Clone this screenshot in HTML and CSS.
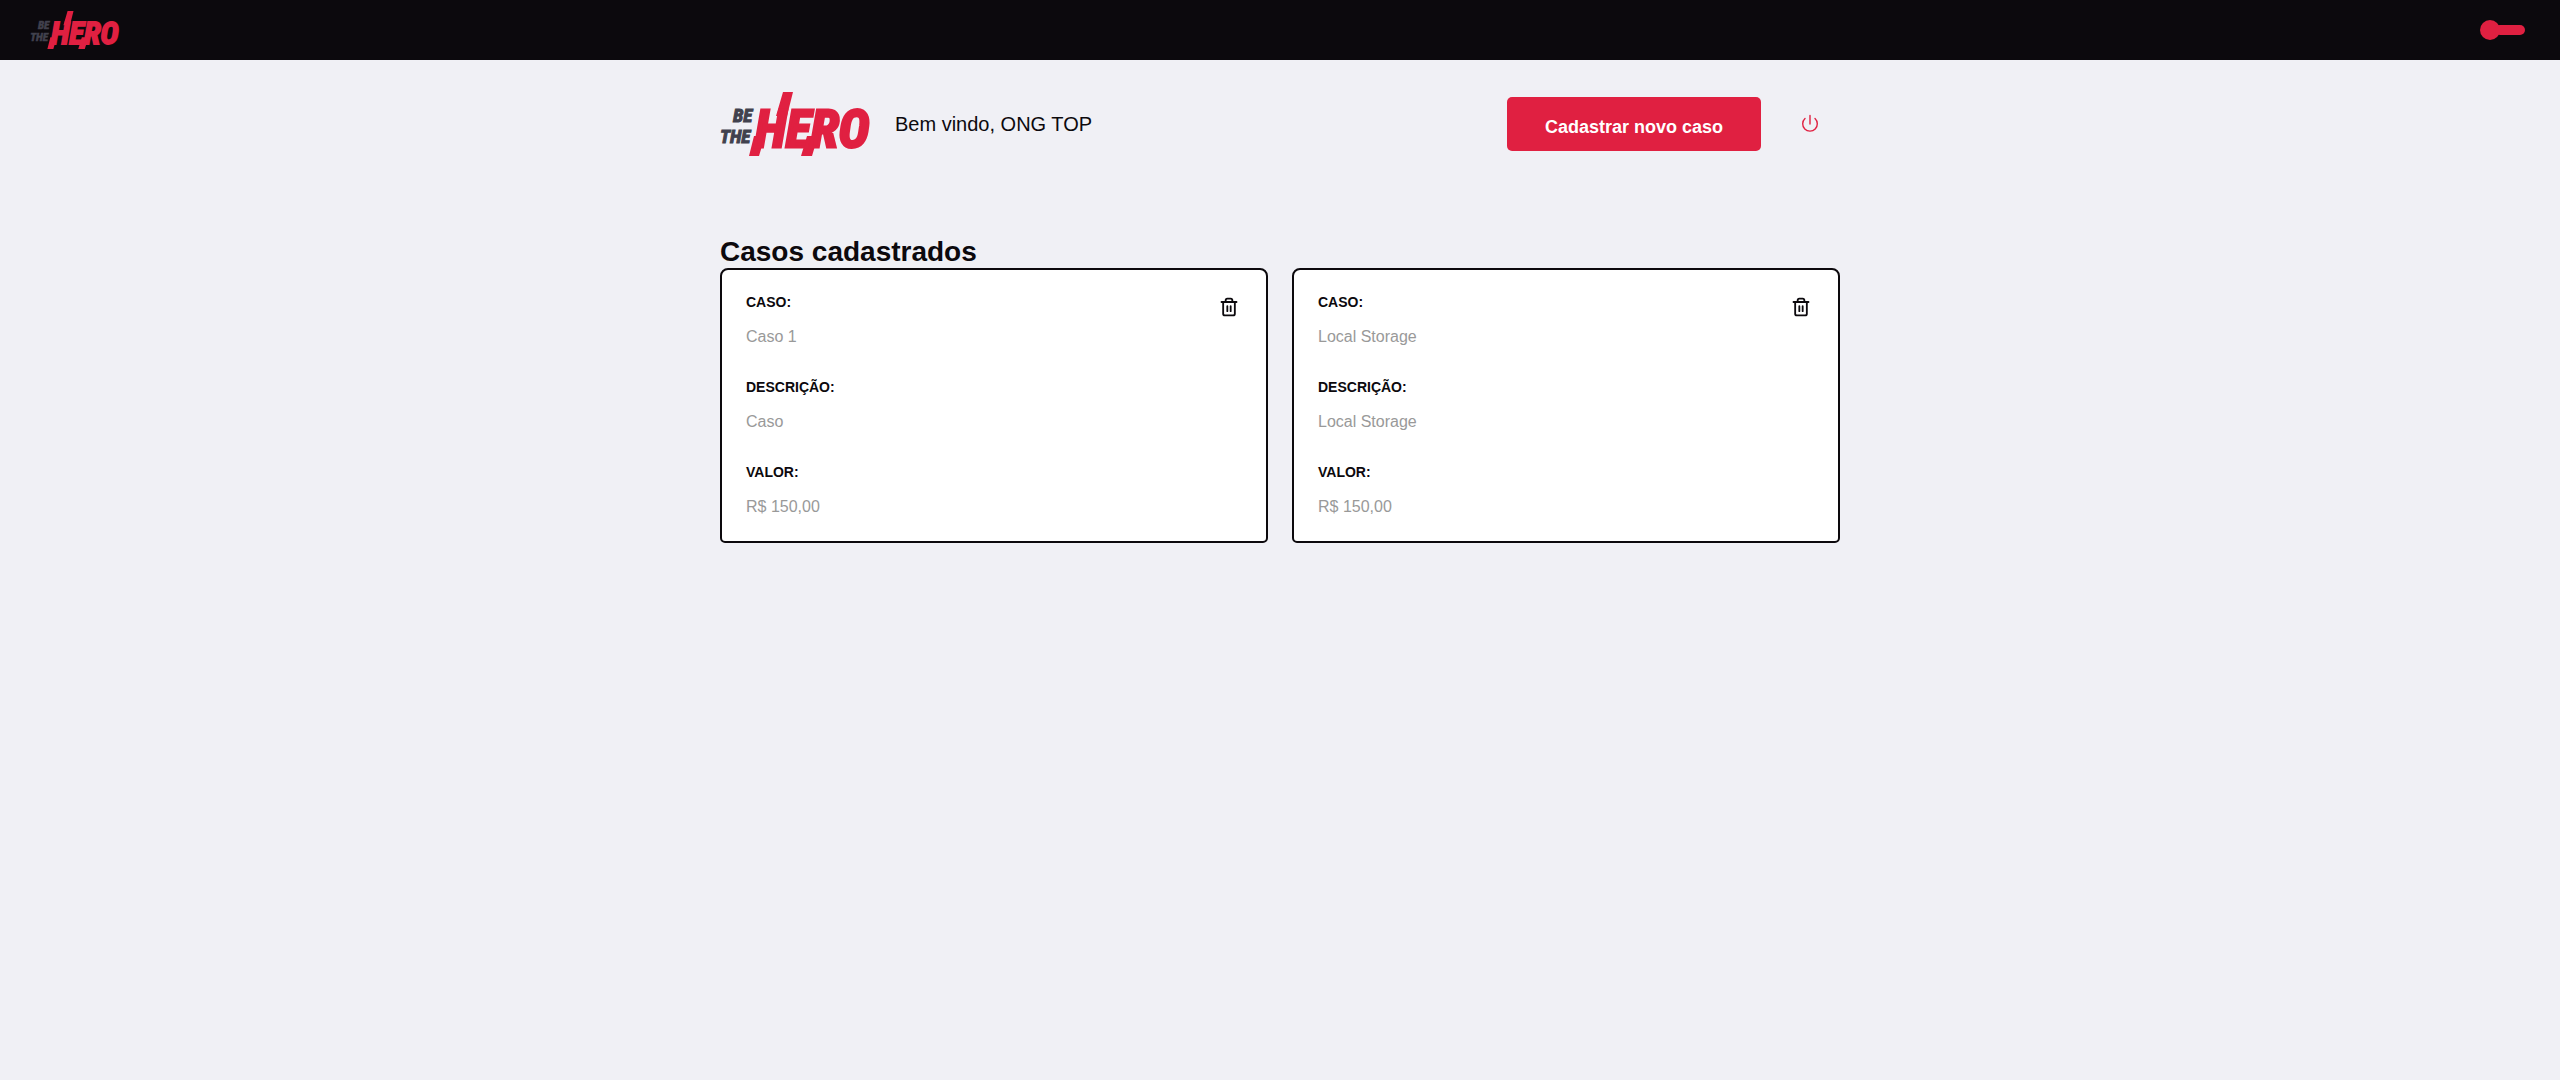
FILE: index.html
```
<!DOCTYPE html>
<html lang="pt-BR">
<head>
<meta charset="utf-8">
<meta name="viewport" content="width=device-width, initial-scale=1">
<title>Be The Hero</title>
<link rel="stylesheet" href="styles.css">
</head>
<body>
<svg class="defs" aria-hidden="true">
  <symbol id="logo" viewBox="0 0 151 64">
    <text class="logo-small" x="13" y="30">BE</text>
    <text class="logo-small" x="0" y="51">THE</text>
    <path class="logo-accent" d="M34 44h11l-6 20H29zM63 0h10l-6 24H56zM87 44h11l-6 20H81z"/>
    <text class="logo-big" x="35" y="55">HERO</text>
  </symbol>
  <symbol id="power" viewBox="0 0 20 20">
    <path stroke-width="1.4" d="M5 4.500A7.300 7.300 0 1 0 15 4.500M10 1.500v8.500"/>
  </symbol>
  <symbol id="trash" viewBox="0 0 24 24">
    <path stroke-width="2.2" d="M3 6h18M19 6v14a2 2 0 0 1-2 2H7a2 2 0 0 1-2-2V6M8 6V4a2 2 0 0 1 2-2h4a2 2 0 0 1 2 2v2M10 11v6M14 11v6"/>
  </symbol>
</svg>

<nav class="topbar">
  <a class="topbar-brand" href="#" aria-label="Be The Hero"><svg class="logo logo-nav"><use href="#logo"/></svg></a>
  <input class="toggle" type="checkbox" aria-label="Alternar tema">
</nav>

<main class="container">
  <header class="profile">
    <svg class="logo" role="img" aria-label="Be The Hero"><use href="#logo"/></svg>
    <span class="welcome">Bem vindo, ONG TOP</span>
    <a class="new-case" href="#">Cadastrar novo caso</a>
    <button class="logout" type="button" aria-label="Sair"><svg class="icon power"><use href="#power"/></svg></button>
  </header>

  <h1 class="title">Casos cadastrados</h1>
  <ul class="cases">
    <li class="case">
      <dl class="case-data">
        <dt>CASO:</dt><dd>Caso 1</dd>
        <dt>DESCRIÇÃO:</dt><dd>Caso</dd>
        <dt>VALOR:</dt><dd>R$ 150,00</dd>
      </dl>
      <button class="delete" type="button" aria-label="Excluir"><svg class="icon trash"><use href="#trash"/></svg></button>
    </li>
    <li class="case">
      <dl class="case-data">
        <dt>CASO:</dt><dd>Local Storage</dd>
        <dt>DESCRIÇÃO:</dt><dd>Local Storage</dd>
        <dt>VALOR:</dt><dd>R$ 150,00</dd>
      </dl>
      <button class="delete" type="button" aria-label="Excluir"><svg class="icon trash"><use href="#trash"/></svg></button>
    </li>
  </ul>
</main>
</body>
</html>
```
FILE: styles.css
```
* { box-sizing: border-box; margin: 0; padding: 0; }

body {
  min-height: 100vh;
  background: #f0f0f5;
  color: #0c090d;
  font-family: "Liberation Sans", Arial, sans-serif;
  font-size: 16px;
}

button { border: 0; background: none; cursor: pointer; font: inherit; }

.defs { display: none; }

.topbar {
  display: flex;
  align-items: center;
  justify-content: space-between;
  height: 60px;
  padding: 0 35px 0 30px;
  background: #0c090d;
}
.topbar-brand { display: flex; }

.logo { width: 151px; height: 64px; flex: none; }
.logo-nav { width: 90px; height: 38px; }
.logo-small, .logo-big {
  font-family: "Liberation Sans Narrow", "Roboto Condensed", "Liberation Sans", sans-serif;
  font-weight: 700;
  font-style: italic;
}
.logo-small { font-size: 19px; fill: #41414d; stroke: #41414d; stroke-width: 1px; }
.logo-big { font-size: 52px; fill: #e02041; stroke: #e02041; stroke-width: 3px; }
.logo-accent { fill: #e02041; }

.toggle {
  appearance: none;
  display: flex;
  align-items: center;
  width: 45px;
  height: 20px;
  cursor: pointer;
}
.toggle::before {
  content: "";
  width: 20px;
  height: 20px;
  border-radius: 50%;
  background: #e02041;
}
.toggle::after {
  content: "";
  width: 30px;
  height: 10px;
  margin-left: -5px;
  border-radius: 5px;
  background: #e02041;
}

.container {
  max-width: 1168px;
  margin: 0 auto;
  padding: 32px 24px;
}

.profile { display: flex; align-items: center; }
.welcome { margin-left: 24px; font-size: 20px; }
.new-case {
  width: 254px;
  height: 54px;
  margin-left: auto;
  padding-top: 4px;
  border-radius: 5px;
  background: #e02041;
  color: #fff;
  font-size: 18px;
  font-weight: 700;
  line-height: 52px;
  text-align: center;
  text-decoration: none;
}
.logout {
  display: flex;
  align-items: center;
  justify-content: center;
  width: 60px;
  height: 60px;
  margin-left: 19px;
}

.icon { fill: none; stroke: currentColor; stroke-linecap: round; stroke-linejoin: round; }
.power { width: 20px; height: 20px; color: #e02041; }
.trash { width: 20px; height: 20px; color: #0c090d; }

.title {
  margin-top: 80px;
  font-size: 28px;
  line-height: 32px;
}

.cases {
  display: grid;
  grid-template-columns: repeat(2, 1fr);
  gap: 24px;
  list-style: none;
}
.case {
  display: flex;
  align-items: flex-start;
  justify-content: space-between;
  padding: 24px;
  border: 2px solid #0c090d;
  border-radius: 8px 8px 5px 5px;
  background: #fff;
}
.case-data dt { font-size: 14px; font-weight: 700; line-height: 16px; }
.case-data dd { margin-top: 16px; color: #999; line-height: 21px; }
.case-data dd + dt { margin-top: 32px; }
.delete { display: flex; padding: 3px; }
```
